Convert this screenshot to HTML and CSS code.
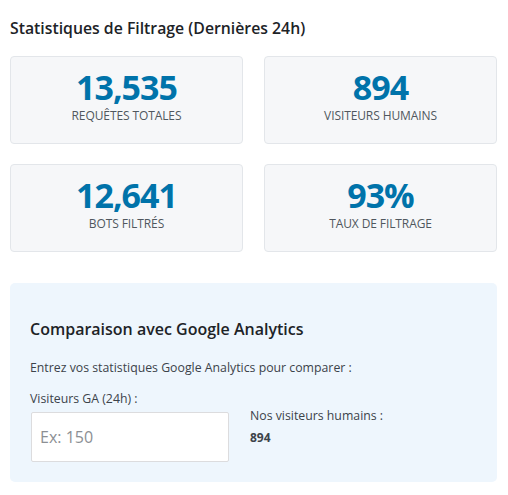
FILE: index.html
```html
<!DOCTYPE html>
<html lang="fr">
<head>
<meta charset="utf-8">
<link rel="stylesheet" href="styles.css">
</head>
<body>
<div class="wrap">
  <h2 class="title">Statistiques de Filtrage (Dernières 24h)</h2>
  <div class="grid">
    <div class="card"><div class="num">13,535</div><div class="lbl">Requêtes totales</div></div>
    <div class="card"><div class="num">894</div><div class="lbl">Visiteurs humains</div></div>
    <div class="card"><div class="num">12,641</div><div class="lbl">Bots filtrés</div></div>
    <div class="card"><div class="num">93%</div><div class="lbl">Taux de filtrage</div></div>
  </div>
  <div class="compare">
    <h3 class="ctitle">Comparaison avec Google Analytics</h3>
    <p class="intro">Entrez vos statistiques Google Analytics pour comparer :</p>
    <div class="row">
      <div class="field">
        <label class="flabel" for="ga">Visiteurs GA (24h) :</label>
        <input id="ga" class="input" type="number" placeholder="Ex: 150">
      </div>
      <div class="ours">
        <div class="olabel">Nos visiteurs humains :</div>
        <div class="oval">894</div>
      </div>
    </div>
  </div>
</div>
</body>
</html>
```
FILE: styles.css
```css
* { box-sizing: border-box; }
body {
  margin: 0;
  background: #fff;
  font-family: "Open Sans", "Noto Sans", sans-serif;
  color: #1d2327;
}
.wrap { padding: 17px 11px 0 10px; }
.title {
  margin: 0;
  font-size: 15.8px;
  font-weight: 600;
  line-height: 22px;
  color: #1d2327;
}
.grid {
  margin-top: 17px;
  display: grid;
  grid-template-columns: 1fr 1fr;
  column-gap: 21px;
  row-gap: 20px;
}
.card {
  height: 88px;
  background: #f6f7f9;
  border: 1px solid #e3e6ea;
  border-radius: 4px;
  display: flex;
  flex-direction: column;
  align-items: center;
  padding-top: 12px;
}
.num {
  font-size: 34px;
  font-weight: 700;
  line-height: 36px;
  color: #0073aa;
  letter-spacing: -1px;
}
.lbl {
  margin-top: 4px;
  font-size: 12px;
  line-height: 14px;
  text-transform: uppercase;
  color: #50575e;
  letter-spacing: -0.1px;
}
.compare {
  margin-top: 31px;
  background: #eef6fd;
  border-radius: 5px;
  padding: 35px 20px 20px 20px;
  height: 199px;
}
.ctitle {
  margin: 0;
  font-size: 16px;
  font-weight: 600;
  line-height: 22px;
  color: #1d2327;
}
.intro {
  margin: 19px 0 0 0;
  font-size: 12.3px;
  line-height: 18px;
  color: #3c434a;
}
.row {
  margin-top: 13px;
  display: flex;
  gap: 21px;
}
.field { display: flex; flex-direction: column; width: 199px; }
.flabel {
  font-size: 12.3px;
  line-height: 18px;
  color: #3c434a;
  margin-bottom: 4px;
}
.input {
  margin-left: 1px;
  width: 198px;
  height: 50px;
  border: 1px solid #dcdcde;
  border-radius: 2px;
  background: #fff;
  padding: 0 8px;
  font-family: inherit;
  font-size: 16px;
  color: #2c3338;
}
.input::placeholder { color: #8c8f94; }
.ours { padding-top: 17px; }
.olabel {
  font-size: 12.3px;
  line-height: 18px;
  color: #3c434a;
}
.oval {
  margin-top: 4px;
  font-size: 12px;
  font-weight: 700;
  line-height: 18px;
  color: #3c434a;
}
```
